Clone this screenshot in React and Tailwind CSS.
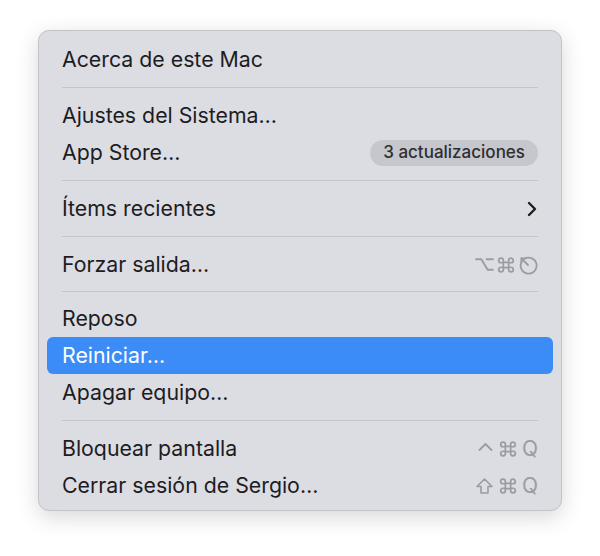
import React from "react";

const font = { fontFamily: "Inter, 'Liberation Sans', 'DejaVu Sans', sans-serif" };

function Chevron() {
    return (
        <svg width="12" height="18" viewBox="0 0 12 18" fill="none">
            <path d="M3 3l6 6-6 6" stroke="#1d1d1f" strokeWidth="2.4" strokeLinecap="round" strokeLinejoin="round" />
        </svg>
    );
}

function EscapeIcon() {
    return (
        <svg width="20" height="20" viewBox="0 0 19 19" fill="none" stroke="#9b9ba1" strokeWidth="1.7" strokeLinecap="round" strokeLinejoin="round">
            <path d="M3.6 6.2A7.6 7.6 0 1 0 6.2 3.6" />
            <path d="M9.5 9.5L3.2 3.2" />
            <path d="M3.2 7.2V3.2h4" />
        </svg>
    );
}

function OptionIcon() {
    return (
        <svg width="19" height="17" viewBox="0 0 18 16" fill="none" stroke="#9b9ba1" strokeWidth="1.8" strokeLinecap="round" strokeLinejoin="round">
            <path d="M1 3h5l6 10h5" />
            <path d="M11 3h6" />
        </svg>
    );
}

function CmdIcon() {
    return (
        <svg width="18" height="18" viewBox="0 0 17 17" fill="none" stroke="#9b9ba1" strokeWidth="1.6">
            <path d="M6 6h5v5H6z" />
            <path d="M6 6V4.2A2.2 2.2 0 1 0 3.8 6.4H6M11 6V4.2a2.2 2.2 0 1 1 2.2 2.2H11M6 11v1.8a2.2 2.2 0 1 1-2.2-2.2H6M11 11v1.8a2.2 2.2 0 1 0 2.2-2.2H11" />
        </svg>
    );
}

function CtrlIcon() {
    return (
        <svg width="17" height="16" viewBox="0 0 16 16" fill="none" stroke="#9b9ba1" strokeWidth="1.8" strokeLinecap="round" strokeLinejoin="round">
            <path d="M2 9l6-6 6 6" />
        </svg>
    );
}

function ShiftIcon() {
    return (
        <svg width="19" height="18" viewBox="0 0 18 18" fill="none" stroke="#9b9ba1" strokeWidth="1.6" strokeLinejoin="round">
            <path d="M9 2L1.5 9.5H5.5V16H12.5V9.5H16.5Z" />
        </svg>
    );
}

function Q() {
    return <span className="text-[21px] leading-none text-[#9b9ba1]">Q</span>;
}

function Row({ label, active, children }) {
    return (
        <div
            className={`h-[37px] px-[15px] flex items-center justify-between rounded-[6px] ${
                active ? "bg-[#3b8cf6] text-white" : "text-[#1d1d1f]"
            }`}
        >
            <span className="text-[21.3px] leading-none">{label}</span>
            {children}
        </div>
    );
}

function Separator({ tight }) {
    return (
        <div className={`${tight ? "py-[8px]" : "py-[9px]"} px-[15px]`}>
            <div className="h-px bg-[#c4c4cb]" />
        </div>
    );
}

export default function App() {
    return (
        <div className="w-[600px] h-[556px] bg-white pt-[30px] pl-[38px]" style={font}>
            <div className="w-[524px] h-[481px] bg-[#dcdce3] rounded-[11px] border border-[#c3c3c8] shadow-[0_6px_22px_rgba(0,0,0,0.16)] px-[8px] pt-[10px]">
                <Row label="Acerca de este Mac" />
                <Separator />
                <Row label="Ajustes del Sistema…" />
                <Row label="App Store…">
                    <span className="h-[26px] px-[13px] rounded-full bg-[#c6c6cd] text-[#2e2e31] text-[17px] font-medium flex items-center">
                        3 actualizaciones
                    </span>
                </Row>
                <Separator />
                <Row label="Ítems recientes">
                    <Chevron />
                </Row>
                <Separator />
                <Row label="Forzar salida…">
                    <div className="flex items-center gap-[3px]">
                        <OptionIcon />
                        <CmdIcon />
                        <EscapeIcon />
                    </div>
                </Row>
                <Separator tight />
                <Row label="Reposo" />
                <Row label="Reiniciar…" active />
                <Row label="Apagar equipo…" />
                <Separator />
                <Row label="Bloquear pantalla">
                    <div className="flex items-center gap-[5px]">
                        <CtrlIcon />
                        <CmdIcon />
                        <Q />
                    </div>
                </Row>
                <Row label="Cerrar sesión de Sergio…">
                    <div className="flex items-center gap-[5px]">
                        <ShiftIcon />
                        <CmdIcon />
                        <Q />
                    </div>
                </Row>
            </div>
        </div>
    );
}
